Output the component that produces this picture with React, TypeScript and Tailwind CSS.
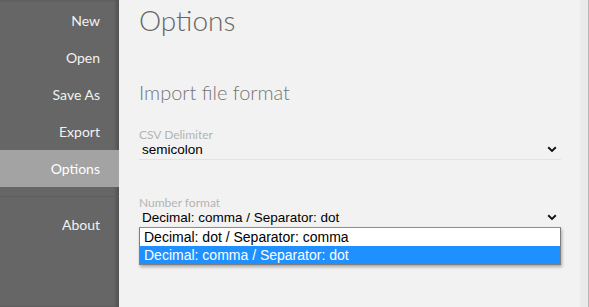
import React from "react";

const navTop = ["New", "Open", "Save As", "Export"];

function Chevron() {
  return (
    <svg width="10" height="7" viewBox="0 0 10 7" className="shrink-0">
      <path d="M1.2 1.3 L5 5 L8.8 1.3" fill="none" stroke="#111" strokeWidth="1.9" />
    </svg>
  );
}

function NavItem({ label, active }: { label: string; active?: boolean }) {
  return (
    <div
      className={`h-[37px] flex items-center justify-end pr-[19px] text-[14px] ${
        active ? "bg-[#a3a3a3] text-white" : "text-[#f2f2f2]"
      }`}
    >
      {label}
    </div>
  );
}

export default function App() {
  return (
    <div className="w-[589px] h-[307px] flex overflow-hidden font-['Lato',sans-serif] bg-[#f2f2f2]">
      {/* Sidebar */}
      <div className="w-[119px] shrink-0 bg-[#666666] pt-[2px] shadow-[inset_-3px_0_3px_rgba(0,0,0,0.18)]">
        {navTop.map((n) => (
          <NavItem key={n} label={n} />
        ))}
        <NavItem label="Options" active />
        <div className="h-[19px] pt-[9px]">
          <div className="h-px bg-[#5d5d5d]" />
        </div>
        <NavItem label="About" />
      </div>

      {/* Main */}
      <div className="flex-1 pl-[20px] pr-[19px]">
        <h1 className="mt-[3px] text-[28px] leading-[34px] font-light text-[#666]">Options</h1>

        <h2 className="mt-[43px] text-[20px] leading-[24px] font-light text-[#757575]">
          Import file format
        </h2>

        <div className="mt-[24px]">
          <div className="text-[12px] leading-[14px] text-[#b4b4b4]">CSV Delimiter</div>
          <div className="flex items-center justify-between pl-[3px] pr-[4px] pb-[2px] border-b border-[#e2e2e2] font-['Liberation_Sans',Arial,sans-serif] text-[13.5px] leading-[15px] text-black">
            <span>semicolon</span>
            <Chevron />
          </div>
        </div>

        <div className="mt-[36px]">
          <div className="text-[12px] leading-[14px] text-[#b4b4b4]">Number format</div>
          <div className="relative">
            <div className="flex items-center justify-between pl-[3px] pr-[4px] pb-[2px] font-['Liberation_Sans',Arial,sans-serif] text-[13.5px] leading-[15px] text-black">
              <span>Decimal: comma / Separator: dot</span>
              <Chevron />
            </div>
            <div className="absolute left-0 right-0 top-[17px] border border-[#7d7d7d] border-t-[#6f93c9] bg-white shadow-[1px_2px_3px_rgba(0,0,0,0.3)] font-['Liberation_Sans',Arial,sans-serif] text-[14px]">
              <div className="h-[18px] leading-[18px] pl-[4px] text-black">Decimal: dot / Separator: comma</div>
              <div className="h-[18px] leading-[18px] pl-[4px] bg-[#1e90ff] text-white">
                Decimal: comma / Separator: dot
              </div>
            </div>
          </div>
        </div>
      </div>

      {/* Right strip */}
      <div className="w-[9px] shrink-0 bg-[#eaeaea] border-r border-[#b5b5b5]" />
    </div>
  );
}
